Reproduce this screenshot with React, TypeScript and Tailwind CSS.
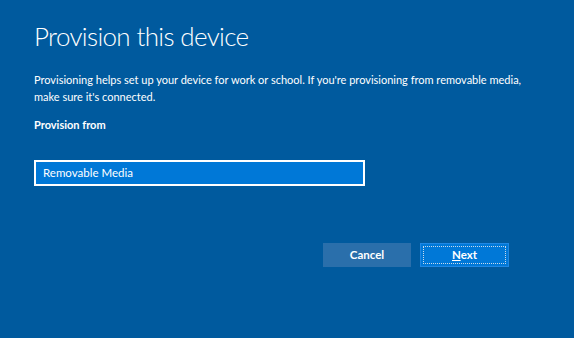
export default function App() {
  return (
    <div
      className="w-[574px] h-[338px] bg-[#005a9e] text-white overflow-hidden"
      style={{ fontFamily: 'Lato, "Noto Sans", sans-serif' }}
    >
      <div className="pl-[34px] pr-[20px] pt-[20px]">
        <h1 className="text-[26px] font-light leading-[32px] tracking-[-0.65px]">Provision this device</h1>
        <p className="mt-[19px] max-w-[492px] text-[11px] leading-[17px]">
          Provisioning helps set up your device for work or school. If you're provisioning from removable media,
          make sure it's connected.
        </p>
        <div className="mt-[11px] text-[11px] font-bold leading-[17px]">Provision from</div>
        <div className="mt-[27px] w-[331px] h-[26px] border-2 border-white bg-[#0078d7] flex items-center pl-[7px] text-[11.5px]">
          Removable Media
        </div>
        <div className="mt-[57px] flex gap-[9px] pl-[289px]">
          <button className="w-[88px] h-[24px] bg-[#2a6fab] text-[11.5px] font-bold flex items-center justify-center">
            Cancel
          </button>
          <button className="w-[89px] h-[24px] bg-[#0078d7] border border-[#1e88e5] p-[2px] text-[11.5px] font-bold">
            <span className="w-full h-full border border-dotted border-[#c8d8e8] flex items-center justify-center">
              <span><span className="underline">N</span>ext</span>
            </span>
          </button>
        </div>
      </div>
    </div>
  );
}
